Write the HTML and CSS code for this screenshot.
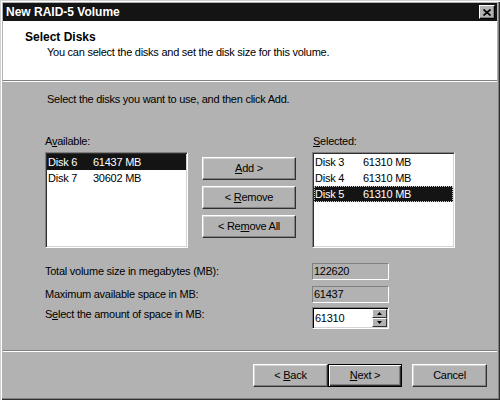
FILE: index.html
```html
<!DOCTYPE html>
<html>
<head>
<meta charset="utf-8">
<title>New RAID-5 Volume</title>
<link rel="stylesheet" href="styles.css">
</head>
<body>
<div class="window">
  <div class="titlebar">
    <span class="title">New RAID-5 Volume</span>
    <span class="close"><svg width="8" height="7" viewBox="0 0 8 7"><path d="M0.5 0.5 L7.5 6.5 M7.5 0.5 L0.5 6.5" stroke="#000" stroke-width="1.7" fill="none"/></svg></span>
  </div>
  <div class="header">
    <div class="h-title">Select Disks</div>
    <div class="h-sub">You can select the disks and set the disk size for this volume.</div>
  </div>
  <div class="sep"></div>
  <div class="content">
    <div class="intro">Select the disks you want to use, and then click Add.</div>
    <div class="picker">
      <div class="lbl">A<u>v</u>ailable:</div>
      <div class="lbl"></div>
      <div class="lbl lbl-sel"><u>S</u>elected:</div>
      <div class="listbox avail">
        <div class="item hl"><span class="n">Disk 6</span><span>61437 MB</span></div>
        <div class="item"><span class="n">Disk 7</span><span>30602 MB</span></div>
      </div>
      <div class="buttons">
        <div class="btn"><span><u>A</u>dd &gt;</span></div>
        <div class="btn"><span>&lt; <u>R</u>emove</span></div>
        <div class="btn"><span>&lt; Re<u>m</u>ove All</span></div>
      </div>
      <div class="listbox sel">
        <div class="item"><span class="n">Disk 3</span><span>61310 MB</span></div>
        <div class="item"><span class="n">Disk 4</span><span>61310 MB</span></div>
        <div class="item hl focus"><span class="n">Disk 5</span><span>61310 MB</span></div>
      </div>
    </div>
    <div class="fields">
      <div class="frow">
        <div class="fl">Total volume size in megabytes (MB):</div>
        <div class="ro">122620</div>
      </div>
      <div class="frow r2">
        <div class="fl">Maximum available space in MB:</div>
        <div class="ro">61437</div>
      </div>
      <div class="frow r3">
        <div class="fl">S<u>e</u>lect the amount of space in MB:</div>
        <div class="spin">
          <div class="spin-text">61310</div>
          <div class="spin-btns">
            <div class="sb"><svg width="5" height="3" viewBox="0 0 5 3"><path d="M2.5 0 L5 3 L0 3 Z" fill="#000"/></svg></div>
            <div class="sb"><svg width="5" height="3" viewBox="0 0 5 3"><path d="M0 0 L5 0 L2.5 3 Z" fill="#000"/></svg></div>
          </div>
        </div>
      </div>
    </div>
  </div>
  <div class="sep fsep"></div>
  <div class="footer">
    <div class="btn wbtn"><span>&lt; <u>B</u>ack</span></div>
    <div class="btn wbtn default"><span><u>N</u>ext &gt;</span></div>
    <div class="btn wbtn"><span>Cancel</span></div>
  </div>
</div>
</body>
</html>
```

FILE: styles.css
```css
html, body {
  margin: 0;
  padding: 0;
  background: #b2b2b2;
}
body {
  font-family: "Liberation Sans", Arial, sans-serif;
  font-size: 11px;
  letter-spacing: -0.25px;
  color: #000;
}
u {
  text-underline-offset: 1px;
}
.window {
  box-sizing: border-box;
  width: 500px;
  height: 400px;
  padding: 3px;
  background: #b2b2b2;
  box-shadow: inset 1px 1px #d0d0d0, inset 2px 2px #fff, inset -1px -1px #303030, inset -2px -2px #808080;
}
.titlebar {
  height: 18px;
  background: #141414;
  display: flex;
  align-items: center;
  justify-content: space-between;
  padding: 0 2px 0 3px;
}
.title {
  color: #fff;
  font-weight: bold;
  font-size: 12px;
  letter-spacing: 0;
  line-height: 18px;
}
.close {
  box-sizing: border-box;
  width: 16px;
  height: 14px;
  background: #b2b2b2;
  border: 1px solid;
  border-color: #fff #000 #000 #fff;
  box-shadow: inset -1px -1px #808080;
  display: flex;
  align-items: center;
  justify-content: center;
}
.header {
  box-sizing: border-box;
  height: 59px;
  background: #fff;
  padding-top: 9px;
}
.h-title {
  font-weight: bold;
  font-size: 12px;
  letter-spacing: 0;
  line-height: 14px;
  padding-left: 22px;
}
.h-sub {
  line-height: 13px;
  margin-top: 2px;
  padding-left: 44px;
}
.sep {
  height: 0;
  border-top: 1px solid #808080;
  border-bottom: 1px solid #fff;
}
.content {
  box-sizing: border-box;
  height: 268px;
  padding: 11px 0 0 42px;
}
.intro {
  line-height: 13px;
  padding-left: 2px;
}
.picker {
  margin-top: 29px;
  display: grid;
  grid-template-columns: 143px 124px 143px;
  grid-template-rows: 13px 96px;
  row-gap: 4px;
}
.lbl {
  line-height: 13px;
}
.lbl-sel {
  padding-left: 1px;
}
.listbox {
  box-sizing: border-box;
  height: 96px;
  background: #fff;
  border: 1px solid;
  border-color: #808080 #fff #fff #808080;
  box-shadow: inset 1px 1px #303030, inset -1px -1px #d4d4d4;
  padding: 1px;
}
.item {
  display: flex;
  height: 16px;
  line-height: 16px;
  padding-left: 1px;
  white-space: nowrap;
}
.avail .n {
  width: 45px;
}
.sel .n {
  width: 48px;
}
.item.hl {
  background: #141414;
  color: #fff;
}
.item.focus {
  outline: 1px dotted #c8c8c8;
  outline-offset: -1px;
}
.buttons {
  display: flex;
  flex-direction: column;
  gap: 6px;
  padding: 5px 0 0 14px;
}
.btn {
  box-sizing: border-box;
  width: 94px;
  height: 23px;
  background: #b2b2b2;
  border: 1px solid;
  border-color: #fff #303030 #303030 #fff;
  box-shadow: inset -1px -1px #808080, inset 1px 1px #d4d4d4;
  display: flex;
  align-items: center;
  justify-content: center;
  line-height: 13px;
}
.fields {
  margin-top: 15px;
  display: flex;
  flex-direction: column;
}
.frow {
  display: flex;
  align-items: center;
}
.frow.r2 {
  margin-top: 6px;
}
.frow.r3 {
  margin-top: 4px;
  align-items: flex-start;
}
.fl {
  width: 267px;
  line-height: 13px;
}
.r3 .fl {
  padding-top: 1px;
}
.ro {
  box-sizing: border-box;
  width: 77px;
  height: 17px;
  border: 1px solid;
  border-color: #808080 #fff #fff #808080;
  line-height: 15px;
  padding-left: 1px;
}
.spin {
  box-sizing: border-box;
  width: 77px;
  height: 22px;
  background: #fff;
  border: 1px solid;
  border-color: #808080 #fff #fff #808080;
  box-shadow: inset 1px 1px #000, inset -1px -1px #d4d4d4;
  padding: 1px;
  display: flex;
}
.spin-text {
  flex: 1;
  line-height: 18px;
  padding-left: 1px;
}
.spin-btns {
  display: flex;
  flex-direction: column;
  width: 15px;
}
.sb {
  box-sizing: border-box;
  height: 9px;
  background: #b2b2b2;
  border: 1px solid;
  border-color: #fff #303030 #303030 #fff;
  display: flex;
  align-items: center;
  justify-content: center;
}
.fsep {
  margin: 0;
}
.footer {
  display: flex;
  justify-content: flex-end;
  padding: 12px 10px 0 0;
}
.wbtn {
  width: 75px;
}
.wbtn.default {
  width: 74px;
  margin-right: 10px;
  border: 1px solid #000;
  box-shadow: inset 1px 1px #fff, inset -1px -1px #303030, inset -2px -2px #808080;
}
```
